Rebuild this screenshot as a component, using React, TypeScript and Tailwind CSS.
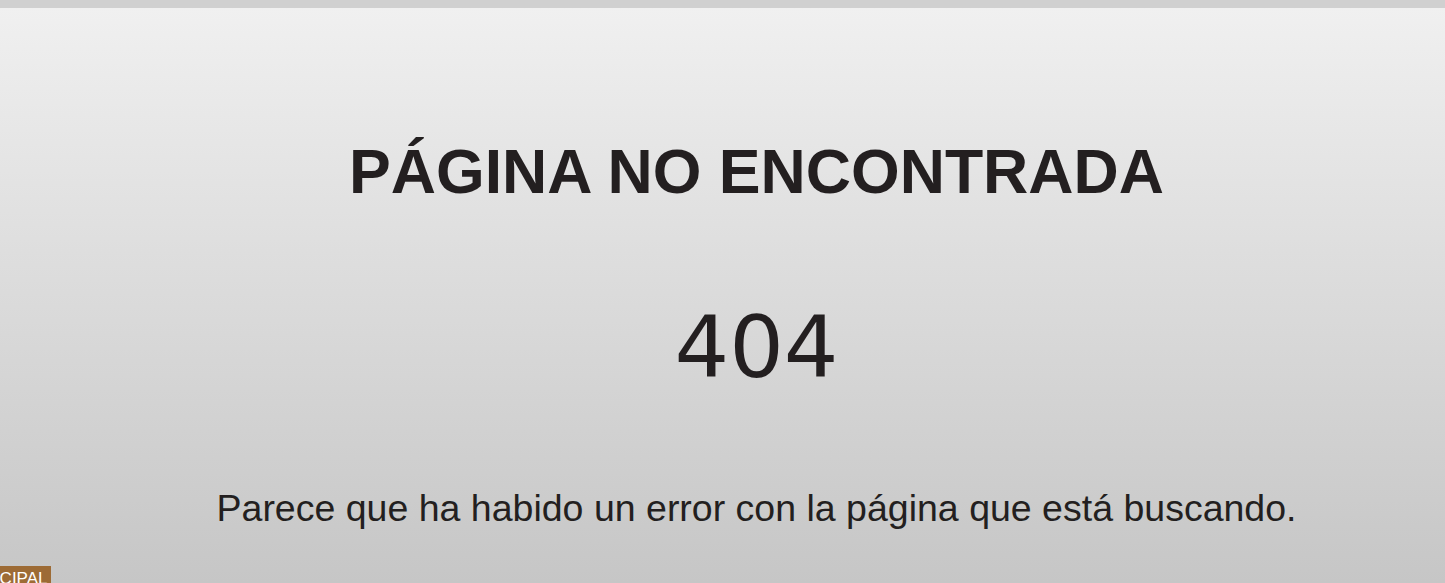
export default function App() {
  return (
    <div className="relative h-[583px] w-full overflow-hidden bg-[#c6c6c6] font-['Liberation_Sans',Arial,sans-serif]">
      <div className="h-2 bg-[#d0d0d0]" />
      <main className="flex h-[575px] flex-col items-center bg-gradient-to-b from-[#f0f0f0] to-[#c6c6c6] pl-[68px] pt-[132px] text-[#231f20]">
        <h1 className="text-[62.6px] font-bold leading-none">PÁGINA NO ENCONTRADA</h1>
        <div className="mt-[101px] font-['DejaVu_Sans',Verdana,sans-serif] text-[86px] leading-none">404</div>
        <p className="mt-[100px] text-[37.5px] leading-none">
          Parece que ha habido un error con la página que está buscando.
        </p>
      </main>
      <div className="absolute left-[-45px] top-[566px] bg-[#9d6b35] pl-1 pr-[3px] pt-[4px] text-[17px] leading-none text-white">
        PRINCIPAL
      </div>
    </div>
  )
}
